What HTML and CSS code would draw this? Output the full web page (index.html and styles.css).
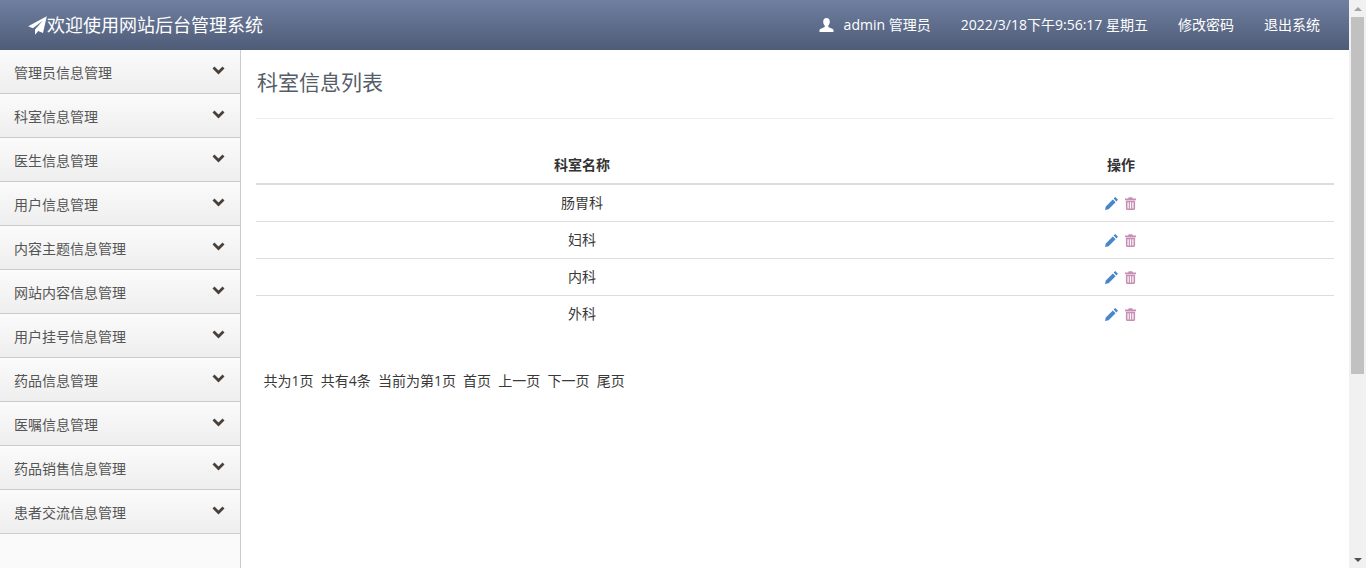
FILE: index.html
```html
<!DOCTYPE html>
<html lang="zh-CN">
<head>
<meta charset="utf-8">
<title>网站后台管理系统</title>
<link rel="stylesheet" href="styles.css">
</head>
<body>
<div class="viewport">
  <div class="page">
    <header class="topbar">
      <div class="brand">
        <svg class="plane" viewBox="0 0 20 20"><path d="M19.8 .2 .2 10.8 5.2 13 15.5 5 7.4 14.2V19.8L10.8 15.8 15.8 18Z"/></svg>
        <span>欢迎使用网站后台管理系统</span>
      </div>
      <nav class="topnav">
        <span class="user">
          <svg class="user-icon" viewBox="0 0 14 14"><path d="M7 0C9.2 0 10.3 1.7 10.3 3.8 10.3 5.4 9.6 6.8 8.8 7.6V8.9L13.2 10.9C13.8 11.2 14 11.6 14 12.2V14H0V12.2C0 11.6.2 11.2.8 10.9L5.2 8.9V7.6C4.4 6.8 3.7 5.4 3.7 3.8 3.7 1.7 4.8 0 7 0Z"/></svg>
          admin 管理员
        </span>
        <span>2022/3/18下午9:56:17 星期五</span>
        <a>修改密码</a>
        <a>退出系统</a>
      </nav>
    </header>
    <div class="body">
      <aside class="sidebar">
        <div class="menu-item"><span>管理员信息管理</span><svg class="chev" viewBox="0 0 13 9"><path d="M1.5 1.5 6.5 6.5 11.5 1.5"/></svg></div>
        <div class="menu-item"><span>科室信息管理</span><svg class="chev" viewBox="0 0 13 9"><path d="M1.5 1.5 6.5 6.5 11.5 1.5"/></svg></div>
        <div class="menu-item"><span>医生信息管理</span><svg class="chev" viewBox="0 0 13 9"><path d="M1.5 1.5 6.5 6.5 11.5 1.5"/></svg></div>
        <div class="menu-item"><span>用户信息管理</span><svg class="chev" viewBox="0 0 13 9"><path d="M1.5 1.5 6.5 6.5 11.5 1.5"/></svg></div>
        <div class="menu-item"><span>内容主题信息管理</span><svg class="chev" viewBox="0 0 13 9"><path d="M1.5 1.5 6.5 6.5 11.5 1.5"/></svg></div>
        <div class="menu-item"><span>网站内容信息管理</span><svg class="chev" viewBox="0 0 13 9"><path d="M1.5 1.5 6.5 6.5 11.5 1.5"/></svg></div>
        <div class="menu-item"><span>用户挂号信息管理</span><svg class="chev" viewBox="0 0 13 9"><path d="M1.5 1.5 6.5 6.5 11.5 1.5"/></svg></div>
        <div class="menu-item"><span>药品信息管理</span><svg class="chev" viewBox="0 0 13 9"><path d="M1.5 1.5 6.5 6.5 11.5 1.5"/></svg></div>
        <div class="menu-item"><span>医嘱信息管理</span><svg class="chev" viewBox="0 0 13 9"><path d="M1.5 1.5 6.5 6.5 11.5 1.5"/></svg></div>
        <div class="menu-item"><span>药品销售信息管理</span><svg class="chev" viewBox="0 0 13 9"><path d="M1.5 1.5 6.5 6.5 11.5 1.5"/></svg></div>
        <div class="menu-item"><span>患者交流信息管理</span><svg class="chev" viewBox="0 0 13 9"><path d="M1.5 1.5 6.5 6.5 11.5 1.5"/></svg></div>
      </aside>
      <main class="content">
        <h1 class="title">科室信息列表</h1>
        <table class="list">
          <thead><tr><th class="col-name">科室名称</th><th>操作</th></tr></thead>
          <tbody>
            <tr><td>肠胃科</td><td class="ops"><svg class="ico edit" viewBox="0 0 13 13"><path d="M10.2 0 13 2.8 11.4 4.4 8.6 1.6ZM7.8 2.4 10.6 5.2 3.6 12.2 0 13 .8 9.4Z"/></svg><svg class="ico trash" viewBox="0 0 12 13"><path d="M4.2.3H7.8L8.4 1.5H11.5V3.2H.5V1.5H3.6ZM1.4 3.8H10.6V11.6C10.6 12.4 10.1 12.9 9.4 12.9H2.6C1.9 12.9 1.4 12.4 1.4 11.6ZM3 5.2V11.6H4.2V5.2ZM5.4 5.2V11.6H6.6V5.2ZM7.8 5.2V11.6H9V5.2Z" fill-rule="evenodd"/></svg></td></tr>
            <tr><td>妇科</td><td class="ops"><svg class="ico edit" viewBox="0 0 13 13"><path d="M10.2 0 13 2.8 11.4 4.4 8.6 1.6ZM7.8 2.4 10.6 5.2 3.6 12.2 0 13 .8 9.4Z"/></svg><svg class="ico trash" viewBox="0 0 12 13"><path d="M4.2.3H7.8L8.4 1.5H11.5V3.2H.5V1.5H3.6ZM1.4 3.8H10.6V11.6C10.6 12.4 10.1 12.9 9.4 12.9H2.6C1.9 12.9 1.4 12.4 1.4 11.6ZM3 5.2V11.6H4.2V5.2ZM5.4 5.2V11.6H6.6V5.2ZM7.8 5.2V11.6H9V5.2Z" fill-rule="evenodd"/></svg></td></tr>
            <tr><td>内科</td><td class="ops"><svg class="ico edit" viewBox="0 0 13 13"><path d="M10.2 0 13 2.8 11.4 4.4 8.6 1.6ZM7.8 2.4 10.6 5.2 3.6 12.2 0 13 .8 9.4Z"/></svg><svg class="ico trash" viewBox="0 0 12 13"><path d="M4.2.3H7.8L8.4 1.5H11.5V3.2H.5V1.5H3.6ZM1.4 3.8H10.6V11.6C10.6 12.4 10.1 12.9 9.4 12.9H2.6C1.9 12.9 1.4 12.4 1.4 11.6ZM3 5.2V11.6H4.2V5.2ZM5.4 5.2V11.6H6.6V5.2ZM7.8 5.2V11.6H9V5.2Z" fill-rule="evenodd"/></svg></td></tr>
            <tr><td>外科</td><td class="ops"><svg class="ico edit" viewBox="0 0 13 13"><path d="M10.2 0 13 2.8 11.4 4.4 8.6 1.6ZM7.8 2.4 10.6 5.2 3.6 12.2 0 13 .8 9.4Z"/></svg><svg class="ico trash" viewBox="0 0 12 13"><path d="M4.2.3H7.8L8.4 1.5H11.5V3.2H.5V1.5H3.6ZM1.4 3.8H10.6V11.6C10.6 12.4 10.1 12.9 9.4 12.9H2.6C1.9 12.9 1.4 12.4 1.4 11.6ZM3 5.2V11.6H4.2V5.2ZM5.4 5.2V11.6H6.6V5.2ZM7.8 5.2V11.6H9V5.2Z" fill-rule="evenodd"/></svg></td></tr>
          </tbody>
        </table>
        <div class="pager"><span>共为1页</span><span>共有4条</span><span>当前为第1页</span><a>首页</a><a>上一页</a><a>下一页</a><a>尾页</a></div>
      </main>
    </div>
  </div>
  <div class="scrollbar">
    <div class="sb-btn"><span class="arrow-up"></span></div>
    <div class="sb-track"><div class="sb-thumb"></div></div>
    <div class="sb-btn"><span class="arrow-down"></span></div>
  </div>
</div>
</body>
</html>
```
FILE: styles.css
```css
* { box-sizing: border-box; }
html, body { margin: 0; height: 100%; overflow: hidden; }
body {
  font-family: "Open Sans", "Noto Sans CJK SC", sans-serif;
  font-size: 14px;
  color: #393939;
  background: #fff;
}
.viewport { display: flex; height: 568px; }
.page { flex: 1; min-width: 0; display: flex; flex-direction: column; }

.topbar {
  height: 50px;
  flex: none;
  display: flex;
  align-items: center;
  justify-content: space-between;
  padding: 0 29px 2px 28px;
  color: #fff;
  background: linear-gradient(#6f7fa0, #4f5c78);
}
.brand { display: flex; align-items: center; font-size: 18px; }
.plane { width: 19px; height: 19px; fill: #fff; flex: none; margin-top: 2px; }
.topnav { display: flex; align-items: center; gap: 30px; font-size: 14px; }
.user { display: flex; align-items: center; gap: 10px; }
.user-icon { width: 15px; height: 14px; fill: #fff; margin-top: 2px; }

.body { flex: 1; display: flex; min-height: 0; }
.sidebar {
  width: 241px;
  flex: none;
  background: #fafafa;
  border-right: 1px solid #ccc;
}
.menu-item {
  height: 44px;
  display: flex;
  align-items: center;
  justify-content: space-between;
  padding: 1px 15px 0 14px;
  border-bottom: 1px solid #ccc;
  background: linear-gradient(#fbfbfb, #eeeeee);
  color: #555;
  font-size: 14px;
}
.chev {
  width: 13px;
  height: 9px;
  margin-top: -3px;
  fill: none;
  stroke: #4a403a;
  stroke-width: 2.8;
}

.content { flex: 1; min-width: 0; padding: 0 15px; }
.title {
  margin: 0;
  height: 69px;
  padding: 17px 0 0 1px;
  border-bottom: 1px solid #eee;
  font-size: 21px;
  font-weight: 400;
  line-height: 30px;
  color: #555e68;
}
.list { width: 100%; margin-top: 27px; border-collapse: collapse; table-layout: fixed; }
.col-name { width: 652px; }
.list th {
  height: 38px;
  padding-bottom: 2px;
  font-size: 14px;
  font-weight: 700;
  color: #333;
  border-bottom: 2px solid #ddd;
  text-align: center;
}
.list td {
  height: 37px;
  padding: 0 0 2px;
  text-align: center;
  font-size: 14px;
  color: #393939;
  border-bottom: 1px solid #ddd;
}
.list tr:last-child td { border-bottom: 0; }
.list .ops { font-size: 0; padding: 1px 0 0; }
.ico { width: 13px; height: 13px; vertical-align: middle; }
.edit { fill: #4a86c8; }
.trash { margin-left: 6px; fill: #c88fb4; }

.pager { display: flex; gap: 7.2px; margin-top: 39px; padding-left: 7.5px; line-height: 20px; color: #393939; }

.scrollbar { width: 17px; flex: none; display: flex; flex-direction: column; background: #f1f1f1; }
.sb-btn { height: 17px; flex: none; display: flex; align-items: center; justify-content: center; }
.sb-track { flex: 1; padding: 0 2px; }
.sb-thumb { height: 357px; background: #c1c1c1; }
.arrow-up, .arrow-down { width: 0; height: 0; border-left: 4px solid transparent; border-right: 4px solid transparent; }
.arrow-up { border-bottom: 4px solid #a3a3a3; }
.arrow-down { border-top: 4px solid #505050; }
```
